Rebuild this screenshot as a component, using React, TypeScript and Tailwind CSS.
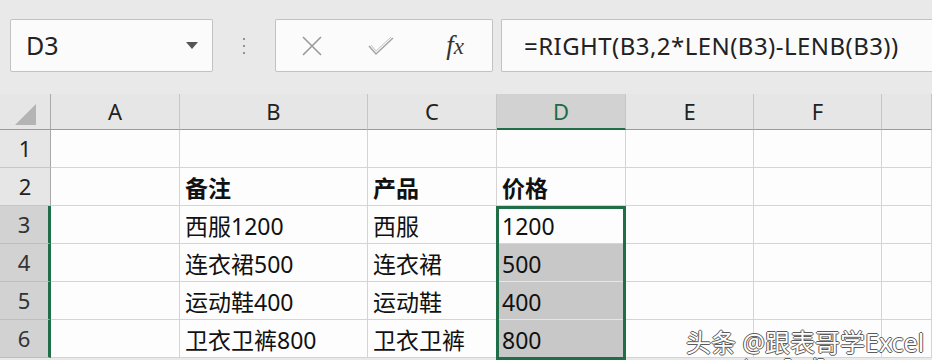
import React from "react";

const font = { fontFamily: '"Noto Sans", "Noto Sans CJK SC", sans-serif' };

const colWidths = [51, 129, 188, 129, 129, 128, 128, 50];
const letters = ["", "A", "B", "C", "D", "E", "F", ""];

const rows: string[][] = [
  ["", "", "", "", "", "", ""],
  ["", "备注", "产品", "价格", "", "", ""],
  ["", "西服1200", "西服", "1200", "", "", ""],
  ["", "连衣裙500", "连衣裙", "500", "", "", ""],
  ["", "运动鞋400", "运动鞋", "400", "", "", ""],
  ["", "卫衣卫裤800", "卫衣卫裤", "800", "", "", ""],
];

const outline =
  "1px 0 0 #5a5a5a, -1px 0 0 #5a5a5a, 0 1px 0 #5a5a5a, 0 -1px 0 #5a5a5a";

const FormulaBar = () => (
  <div className="flex items-start pt-[19px] h-[94px]">
    <div className="ml-[10px] w-[203px] h-[53px] bg-[#fbfbfb] border border-[#c2c2c2] rounded-[2px] flex items-center justify-between pl-[15px] pr-[14px]">
      <span className="text-[25px] text-[#222]">D3</span>
      <svg width="12" height="7" viewBox="0 0 12 7">
        <path d="M0 0 L12 0 L6 7 Z" fill="#555" />
      </svg>
    </div>
    <div className="w-[62px] h-[53px] flex flex-col items-center justify-center gap-[5px]">
      <span className="w-[2px] h-[2px] bg-[#777] rounded-full" />
      <span className="w-[2px] h-[2px] bg-[#777] rounded-full" />
      <span className="w-[2px] h-[2px] bg-[#777] rounded-full" />
    </div>
    <div className="w-[218px] h-[53px] bg-[#fbfbfb] border border-[#c2c2c2] rounded-[2px] flex items-center">
      <div className="w-[72px] flex justify-center">
        <svg width="22" height="20" viewBox="0 0 22 20">
          <path d="M2 1 L20 19 M20 1 L2 19" stroke="#9a9a9a" strokeWidth="1.6" fill="none" />
        </svg>
      </div>
      <div className="w-[66px] flex justify-center">
        <svg width="26" height="20" viewBox="0 0 26 20">
          <path d="M1 10 L8 18 L25 2" stroke="#a5a5a5" strokeWidth="1.5" fill="none" />
          <path d="M3 9 L8 15 L23 1" stroke="#c4c4c4" strokeWidth="1" fill="none" />
        </svg>
      </div>
      <div className="flex-1 flex justify-center pl-[4px]">
        <span className="text-[27px] italic text-[#333]" style={{ fontFamily: '"Liberation Serif", serif' }}>
          f<span className="text-[23px]">x</span>
        </span>
      </div>
    </div>
    <div className="ml-[8px] flex-1 h-[53px] bg-[#fbfbfb] border border-[#c2c2c2] border-r-0 rounded-l-[2px] flex items-center pl-[22px]">
      <span className="text-[24px] text-[#222] tracking-[0.45px]">=RIGHT(B3,2*LEN(B3)-LENB(B3))</span>
    </div>
  </div>
);

const Sheet = () => (
  <div
    className="grid relative"
    style={{ gridTemplateColumns: colWidths.map((w) => `${w}px`).join(" ") }}
  >
    {letters.map((l, i) => (
      <div
        key={"h" + i}
        className={`h-[36px] flex items-center justify-center text-[22px] border-b ${
          i === 0
            ? "bg-[#e6e6e6] border-r border-r-[#a8a8a8] border-b-[#9a9a9a]"
            : i === 4
            ? "bg-[#d2d2d2] text-[#1e6b45] border-b-[2px] border-b-[#1f6e47] border-r border-r-[#c6c6c6]"
            : "bg-[#e6e6e6] text-[#222] border-r border-r-[#c6c6c6] border-b-[#9a9a9a]"
        }`}
      >
        {i === 0 ? (
          <svg width="22" height="22" viewBox="0 0 22 22" className="ml-[2px] mt-[6px]">
            <path d="M21 0 L21 21 L0 21 Z" fill="#b4b4b4" />
          </svg>
        ) : (
          l
        )}
      </div>
    ))}
    {rows.map((row, r) => {
      const sel = r >= 2;
      return (
        <React.Fragment key={"r" + r}>
          <div
            className={`h-[38px] flex items-center justify-center text-[22px] border-b ${
              sel
                ? "bg-[#d2d2d2] text-[#333] border-b-[#bdbdbd] border-r-[3px] border-r-[#1f6e47]"
                : "bg-[#e6e6e6] text-[#222] border-b-[#c6c6c6] border-r border-r-[#a8a8a8]"
            }`}
          >
            {r + 1}
          </div>
          {row.map((c, ci) => {
            const gray = ci === 3 && r >= 3;
            return (
              <div
                key={ci}
                className={`h-[38px] flex items-center pl-[5px] pt-[3px] text-[23px] text-[#111] whitespace-nowrap overflow-hidden border-b border-r ${
                  gray ? "bg-[#c8c8c8] border-b-[#e6e6e6] border-r-[#d4d4d4]" : "bg-[#fdfdfd] border-[#d4d4d4]"
                } ${r === 1 ? "font-bold" : ""}`}
              >
                {c}
              </div>
            );
          })}
        </React.Fragment>
      );
    })}
    <div className="absolute left-[496px] top-[112px] w-[130px] h-[154px] border-[3px] border-[#1f6e47] pointer-events-none" />
  </div>
);

export default function App() {
  return (
    <div className="w-[932px] h-[360px] overflow-hidden bg-[#e9e9e9] relative" style={font}>
      <FormulaBar />
      <Sheet />
      <div
        className="absolute left-[686px] top-[330px] text-[25px] text-white whitespace-nowrap leading-none"
        style={{ textShadow: outline }}
      >
        头条 @跟表哥学Excel
      </div>
      <div
        className="absolute left-[742px] top-[357px] text-[14px] text-white whitespace-nowrap leading-none"
        style={{ textShadow: outline }}
      >
        /www.ExcelEasy
      </div>
    </div>
  );
}
